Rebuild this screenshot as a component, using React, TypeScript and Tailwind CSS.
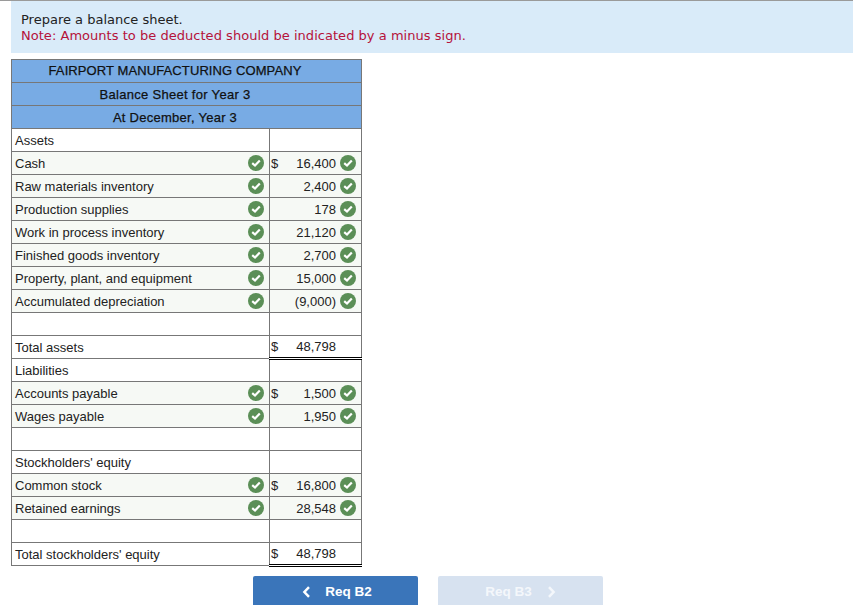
import React from 'react'

type Row = {
  label?: string
  dollar?: boolean
  value?: string
  labelCheck?: boolean
  valueCheck?: boolean
  filled?: boolean
  total?: boolean
}

const rows: Row[] = [
  { label: 'Assets' },
  { label: 'Cash', dollar: true, value: '16,400', labelCheck: true, valueCheck: true, filled: true },
  { label: 'Raw materials inventory', value: '2,400', labelCheck: true, valueCheck: true, filled: true },
  { label: 'Production supplies', value: '178', labelCheck: true, valueCheck: true, filled: true },
  { label: 'Work in process inventory', value: '21,120', labelCheck: true, valueCheck: true, filled: true },
  { label: 'Finished goods inventory', value: '2,700', labelCheck: true, valueCheck: true, filled: true },
  { label: 'Property, plant, and equipment', value: '15,000', labelCheck: true, valueCheck: true, filled: true },
  { label: 'Accumulated depreciation', value: '(9,000)', labelCheck: true, valueCheck: true, filled: true },
  {},
  { label: 'Total assets', dollar: true, value: '48,798', total: true },
  { label: 'Liabilities' },
  { label: 'Accounts payable', dollar: true, value: '1,500', labelCheck: true, valueCheck: true, filled: true },
  { label: 'Wages payable', value: '1,950', labelCheck: true, valueCheck: true, filled: true },
  {},
  { label: "Stockholders' equity" },
  { label: 'Common stock', dollar: true, value: '16,800', labelCheck: true, valueCheck: true, filled: true },
  { label: 'Retained earnings', value: '28,548', labelCheck: true, valueCheck: true, filled: true },
  {},
  { label: "Total stockholders' equity", dollar: true, value: '48,798', total: true },
]

function Check() {
  return (
    <svg width="16" height="16" viewBox="0 0 16 16" className="shrink-0">
      <circle cx="8" cy="8" r="8" fill="#5b8f57" />
      <path d="M4.2 8.2 L7 10.6 L11.8 5.6" fill="none" stroke="#fff" strokeWidth="2.2" />
    </svg>
  )
}

export default function App() {
  return (
    <div className="relative w-[853px] h-[605px] overflow-hidden bg-white border-t border-[#9a9a9a] font-['Liberation_Sans',Arial,sans-serif] text-[13px] text-[#222]">
      <div className="absolute left-[296px] top-[-1px] w-[97px] border-t border-dotted border-[#3a75ba]" />

      <div className="ml-[11px] h-[52px] bg-[#d9ebf9] pl-[10px] pt-[11px] font-['DejaVu_Sans',Verdana,sans-serif] text-[13px] leading-[16px] text-[#222]">
        <p>Prepare a balance sheet.</p>
        <p className="tracking-[0.03px] text-[#b5123a]">Note: Amounts to be deducted should be indicated by a minus sign.</p>
      </div>

      <table className="ml-[11px] mt-[6px] w-[351px] table-fixed border-collapse">
        <colgroup>
          <col className="w-[258px]" />
          <col className="w-[92px]" />
        </colgroup>
        <thead>
          <tr className="h-[23px]">
            <th colSpan={2} className="border border-[#777] bg-[#78abe4] p-0 pr-[23px] text-center font-normal text-[#111]">
              <span className="tracking-[0.1px] [-webkit-text-stroke:0.25px_#111]">FAIRPORT MANUFACTURING COMPANY</span>
            </th>
          </tr>
          <tr className="h-[23px]">
            <th colSpan={2} className="border border-[#777] bg-[#78abe4] p-0 pr-[23px] pt-[1px] text-center font-normal text-[#111]">
              <span className="tracking-[0.3px] [-webkit-text-stroke:0.25px_#111]">Balance Sheet for Year 3</span>
            </th>
          </tr>
          <tr className="h-[23px]">
            <th colSpan={2} className="border border-[#777] bg-[#78abe4] p-0 pr-[23px] pt-[1px] text-center font-normal text-[#111]">
              <span className="tracking-[0.26px] [-webkit-text-stroke:0.25px_#111]">At December, Year 3</span>
            </th>
          </tr>
        </thead>
        <tbody>
          {rows.map((r, i) => (
            <tr key={i} className="h-[23px]">
              <td className={`border border-[#777] p-0 ${r.filled ? 'bg-[#f6f9f5]' : 'bg-white'}`}>
                <div className="flex h-[22px] items-center justify-between pl-[3px] pr-[5px]">
                  <span className="pt-[1px]">{r.label}</span>
                  {r.labelCheck && <Check />}
                </div>
              </td>
              <td
                className={`border p-0 ${r.filled ? 'bg-[#f6f9f5]' : 'bg-white'} ${
                  r.total ? 'border-x-[#777] border-t-black border-b-[3px] border-b-black [border-bottom-style:double]' : 'border-[#777]'
                }`}
              >
                {r.value && (
                  <div className={`flex h-[22px] items-center pl-[1px] pr-[5px] ${r.total ? '-mt-[1px]' : ''}`}>
                    <span className="pt-[1px]">{r.dollar ? '$' : ''}</span>
                    <span className="ml-auto pt-[1px] text-right">{r.value}</span>
                    <span className="ml-[4px] w-[16px] shrink-0">{r.valueCheck && <Check />}</span>
                  </div>
                )}
              </td>
            </tr>
          ))}
        </tbody>
      </table>

      <div className="ml-[253px] mt-[9px] flex gap-[20px] text-[13.5px]">
        <button className="flex h-[32px] w-[165px] items-center justify-center gap-[14px] rounded-[2px] bg-[#3a75ba] pl-[3px] font-bold text-white">
          <svg width="9" height="12" viewBox="0 0 9 12">
            <path d="M7 1.2 L2.4 6 L7 10.8" fill="none" stroke="#fff" strokeWidth="2.5" />
          </svg>
          <span>Req B2</span>
        </button>
        <button className="flex h-[32px] w-[165px] items-center justify-center gap-[15px] rounded-[2px] bg-[#d7e2f0] font-bold text-[#f4f7fb]">
          <span>Req B3</span>
          <svg width="9" height="12" viewBox="0 0 9 12">
            <path d="M2 1.2 L6.6 6 L2 10.8" fill="none" stroke="#f4f7fb" strokeWidth="2.5" />
          </svg>
        </button>
      </div>
    </div>
  )
}
